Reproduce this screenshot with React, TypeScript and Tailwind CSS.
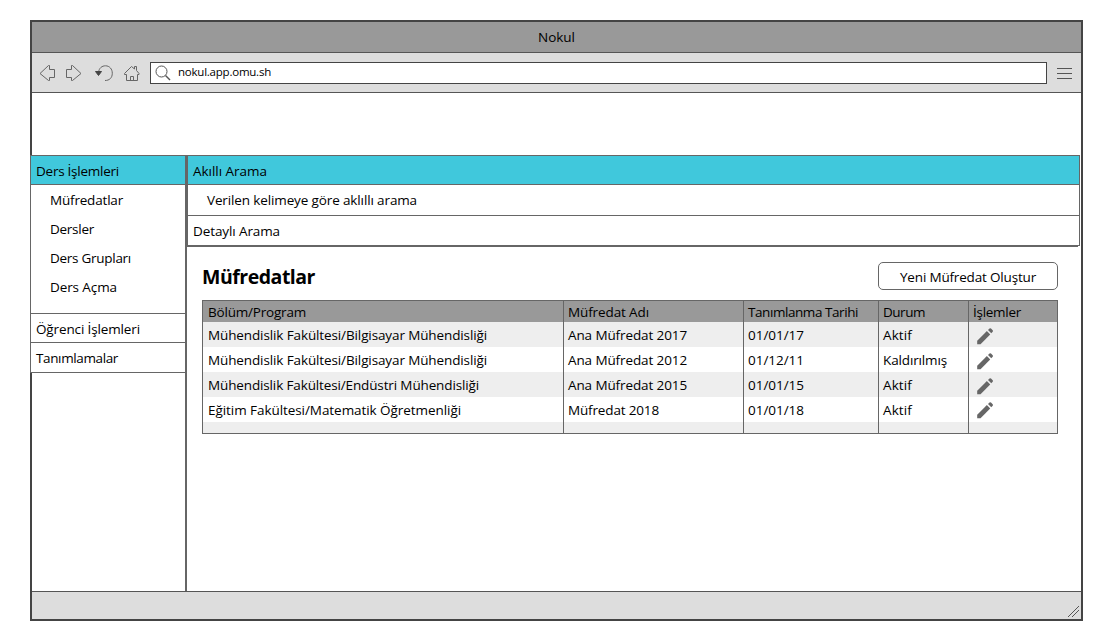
import React from "react";

const font = "font-['Open_Sans',sans-serif]";

function T({ w, children, className = "" }: { w: number; children: string; className?: string }) {
  const ref = React.useRef<HTMLSpanElement>(null);
  const [ls, setLs] = React.useState(0);
  React.useLayoutEffect(() => {
    const el = ref.current;
    if (!el) return;
    el.style.letterSpacing = "0px";
    setLs((w - el.getBoundingClientRect().width) / children.length);
  }, [w, children]);
  return (
    <span ref={ref} className={`inline-block whitespace-nowrap ${className}`} style={{ letterSpacing: `${ls}px` }}>
      {children}
    </span>
  );
}

function Pencil() {
  return (
    <svg width="17" height="17" viewBox="0 0 17 17" fill="#666">
      <path d="M0.2 16.2V12.7L9.9 3.1L13.2 6.4L3.5 16.2Z" />
      <path d="M11 2L12.5 0.6Q13.3 0 14 0.6L15.7 2.3Q16.3 3 15.7 3.8L14.3 5.3Z" />
    </svg>
  );
}

const rows: [string, number, string, number, string, string, number][] = [
  ["Mühendislik Fakültesi/Bilgisayar Mühendisliği", 279, "Ana Müfredat 2017", 119, "01/01/17", "Aktif", 29],
  ["Mühendislik Fakültesi/Bilgisayar Mühendisliği", 279, "Ana Müfredat 2012", 119, "01/12/11", "Kaldırılmış", 64],
  ["Mühendislik Fakültesi/Endüstri Mühendisliği", 271, "Ana Müfredat 2015", 119, "01/01/15", "Aktif", 29],
  ["Eğitim Fakültesi/Matematik Öğretmenliği", 253, "Müfredat 2018", 91, "01/01/18", "Aktif", 29],
];

const grid = "grid grid-cols-[361px_180px_135px_90px_89px]";
const first = "pl-[5px] border-r border-[#666]";
const cell = "pl-1 border-r border-[#666]";

export default function App() {
  return (
    <div className={`${font} h-[621px] w-[1100px] overflow-hidden bg-white pl-[30px] pt-[20px] text-[13.5px] text-black`}>
      <div className="flex h-[601px] w-[1053px] flex-col border-2 border-[#444]">
        <div className="flex h-[31px] shrink-0 items-center justify-center border-b border-[#555] bg-[#999]">
          <T w={37}>Nokul</T>
        </div>
        <div className="flex h-10 shrink-0 items-start border-b border-[#555] bg-[#ddd]">
          <svg className="mt-[9px] shrink-0" width="118" height="24" viewBox="0 0 118 24" fill="none" stroke="#666">
            <path d="M8 11.5L16.5 3.5H17.5V7.5H22.5V15.5H17.5V18.5H16.5Z" />
            <path d="M49 11.5L40.5 3.5H39.5V7.5H34.5V15.5H39.5V18.5H40.5Z" />
            <path d="M66.5 10.5C67 6 70 3.8 73.5 3.8C77.5 3.8 80.3 7 80.3 11.3C80.3 15.8 77.5 18.5 73 18.5" />
            <path d="M63.5 9.5H69.5L66.5 13.5Z" fill="#444" stroke="#444" />
            <path d="M92.5 11.5L99.5 4.5L102.5 7V4.5H104.5V8.5L107 11.5V12.5H105.5V18.5H94.5V12.5H92.5ZM98.5 18.5V14.5H101.5V18.5" />
          </svg>
          <div className="mt-[9px] flex h-[22px] w-[897px] shrink-0 items-center border border-[#444] bg-white">
            <svg className="ml-1 mt-px" width="17" height="17" viewBox="0 0 17 17" fill="none" stroke="#555">
              <circle cx="6.5" cy="6.5" r="5.5" />
              <path d="M10.5 10.5L15 15" strokeWidth="1.4" />
            </svg>
            <T w={93} className="-mt-0.5 ml-1.5 text-[11.5px]">nokul.app.omu.sh</T>
          </div>
          <div className="ml-[10px] mt-[15px] flex h-[11px] w-[15px] flex-col justify-between">
            <div className="h-px bg-[#555]" /><div className="h-px bg-[#555]" /><div className="h-px bg-[#555]" />
          </div>
        </div>
        <div className="flex h-[498px] shrink-0">
          <div className="-ml-[2px] w-[155px] shrink-0 pt-[62px]">
            <div className="h-[218px] border-y border-l border-[#666] bg-white">
              <div className="h-[29px] border-b border-[#666] bg-[#40c8dc] pl-[5px] leading-[31px]"><T w={83}>Ders İşlemleri</T></div>
              <div className="flex h-[129px] flex-col items-start border-b border-[#666] pl-[19px] pt-px leading-[29px]">
                <T w={73}>Müfredatlar</T><T w={44}>Dersler</T><T w={81}>Ders Grupları</T><T w={67}>Ders Açma</T>
              </div>
              <div className="h-[29px] border-b border-[#666] pl-[5px] leading-[31px]"><T w={104}>Öğrenci İşlemleri</T></div>
              <div className="h-[29px] pl-[5px] leading-[31px]"><T w={82}>Tanımlamalar</T></div>
            </div>
          </div>
          <div className="flex-1 pt-[62px]">
            <div className="h-[436px] border-l-2 border-[#666]">
              <div className="h-[91px] w-[893px] border border-[#666]">
                <div className="h-[29px] border-b border-[#666] bg-[#40c8dc] pl-[5px] leading-[31px]"><T w={74}>Akıllı Arama</T></div>
                <div className="h-[31px] border-b border-[#666] pl-[19px] leading-[30px]"><T w={210}>Verilen kelimeye göre aklıllı arama</T></div>
                <div className="h-[29px] pl-[5px] leading-[30px]"><T w={87}>Detaylı Arama</T></div>
              </div>
              <div className="h-px w-[891px] bg-[#666]" />
              <div className="ml-[15px] mt-[15px] flex h-[28px] w-[856px] items-center justify-between">
                <h1 className="pt-0.5 text-[19.5px] font-bold"><T w={113}>Müfredatlar</T></h1>
                <button className="h-[28px] w-[180px] rounded-[5px] border border-[#666] bg-white pt-0.5"><T w={136}>Yeni Müfredat Oluştur</T></button>
              </div>
              <div className="ml-[15px] mt-[10px] h-[134px] w-[856px] border-y border-l border-[#666]">
                <div className={`${grid} h-[21px] bg-[#999] leading-[23px]`}>
                  <div className={first}><T w={98}>Bölüm/Program</T></div>
                  <div className={cell}><T w={81}>Müfredat Adı</T></div>
                  <div className={cell}><T w={110}>Tanımlanma Tarihi</T></div>
                  <div className={cell}><T w={42}>Durum</T></div>
                  <div className={cell}><T w={48}>İşlemler</T></div>
                </div>
                {rows.map((r, i) => (
                  <div key={i} className={`${grid} h-[25px] leading-[26px] ${i % 2 ? "bg-white" : "bg-[#eee]"}`}>
                    <div className={first}><T w={r[1]}>{r[0]}</T></div>
                    <div className={cell}><T w={r[3]}>{r[2]}</T></div>
                    <div className={cell}><T w={56}>{r[4]}</T></div>
                    <div className={cell}><T w={r[6]}>{r[5]}</T></div>
                    <div className={`border-r border-[#666] pl-2 ${i === 3 ? "pt-[5px]" : "pt-[6px]"}`}><Pencil /></div>
                  </div>
                ))}
                <div className={`${grid} h-[11px] bg-[#eee]`}>
                  <div className={first} /><div className={cell} /><div className={cell} /><div className={cell} /><div className={cell} />
                </div>
              </div>
            </div>
          </div>
        </div>
        <div className="flex flex-1 items-end justify-end border-t border-[#555] bg-[#ddd]">
          <svg width="14" height="14" viewBox="0 0 14 14" stroke="#555"><path d="M1 12L12 1M5 12L12 5" /></svg>
        </div>
      </div>
    </div>
  );
}
